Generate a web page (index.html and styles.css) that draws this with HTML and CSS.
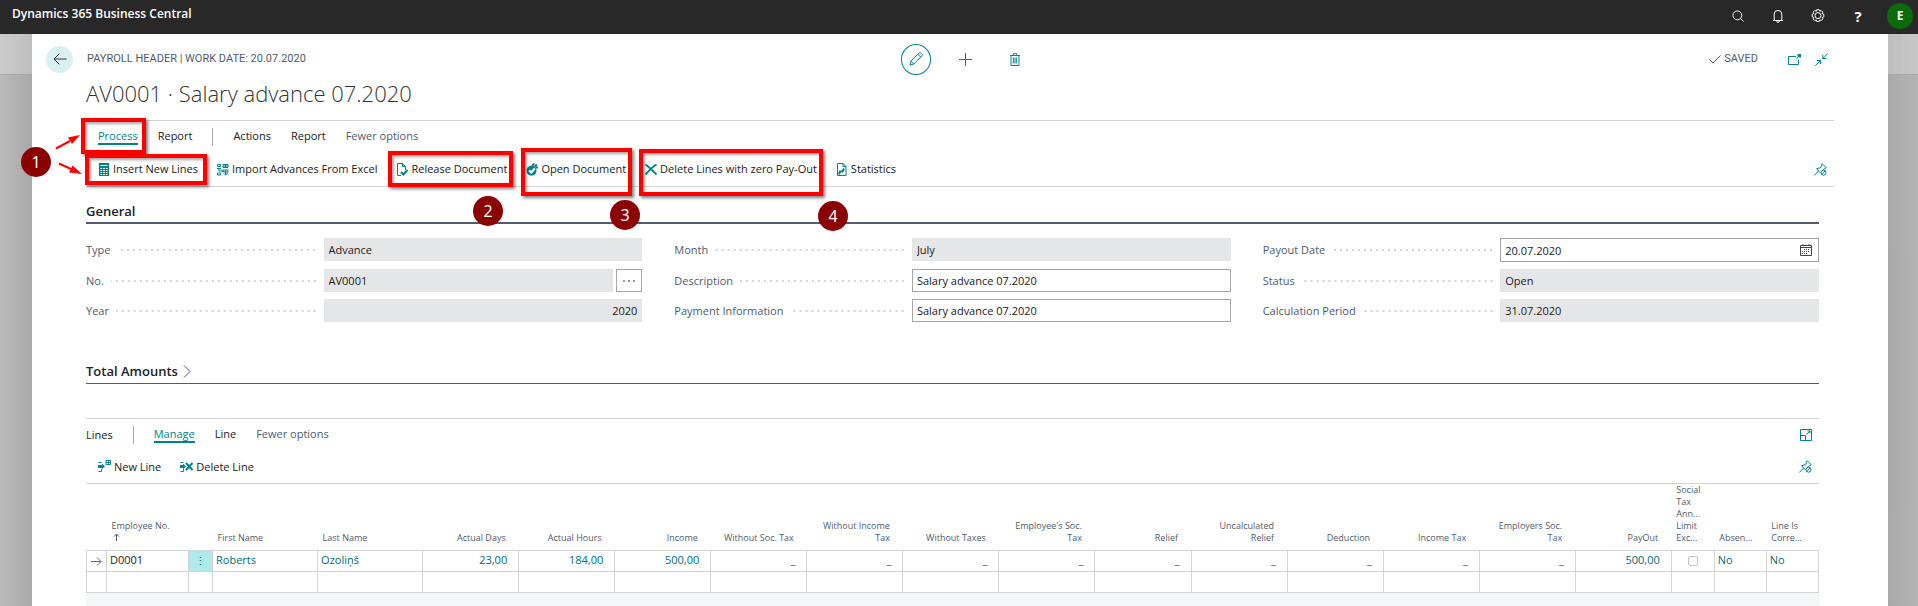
FILE: index.html
```html
<!DOCTYPE html>
<html lang="en">
<head>
<meta charset="utf-8">
<title>Dynamics 365 Business Central</title>
<link rel="stylesheet" href="styles.css">
</head>
<body>
<header class="topbar">
  <span class="brand">Dynamics 365 Business Central</span>
  <nav class="topbar-tools">
    <button class="tool" aria-label="Search"><svg width="12" height="12" viewBox="0 0 13 13"><circle cx="5.800" cy="5.800" r="4.800"/><path d="M9.200 9.200L12.500 12.500"/></svg></button>
    <button class="tool" aria-label="Notifications"><svg width="12" height="14" viewBox="0 0 12 14"><path d="M1 11.500h10M2.200 11.500V5.200a3.800 3.800 0 0 1 7.600 0V11.500M4.700 12a1.300 1.300 0 0 0 2.600 0"/></svg></button>
    <button class="tool" aria-label="Settings"><svg width="14" height="14" viewBox="0 0 14 14"><path d="M5.800.7h2.400l.5 1.500 1.500-.7 1.600 1.700-.7 1.400 1.700.6v2.600l-1.600.6.7 1.500-1.700 1.700-1.500-.7-.5 1.600H5.800l-.5-1.600-1.500.7-1.700-1.700.7-1.500-1.600-.6V5.200l1.600-.6-.7-1.400 1.700-1.700 1.500.7z"/><circle cx="7" cy="6.600" r="3"/></svg></button>
    <button class="tool tool-help" aria-label="Help">?</button>
    <button class="avatar" aria-label="Account">E</button>
  </nav>
</header>

<main class="panel">
  <div class="page-head">
    <div class="head-left">
      <button class="back" aria-label="Back"><svg width="14" height="12" viewBox="0 0 14 12"><path d="M13.500 6H1M6.300.7L1 6l5.300 5.300"/></svg></button>
      <span class="caption">PAYROLL HEADER | WORK DATE: 20.07.2020</span>
    </div>
    <div class="head-mid">
      <button class="edit" aria-label="Edit"><svg width="14" height="14" viewBox="0 0 14 14"><path d="M1 13l.9-3.800L10 1.200c1-.8 2 0 2.600.600s1 1.400.2 2.200L4.800 12z M8.900 2.300l2.800 2.800M1.900 9.200l2.900 2.800"/></svg></button>
      <button class="flat" aria-label="New"><svg width="13" height="13" viewBox="0 0 13 13"><path d="M6.500 0v13M0 6.500h13"/></svg></button>
      <button class="flat" aria-label="Delete"><svg width="10" height="13" viewBox="0 0 10 13"><path d="M0 2.500h10M3.200 2.500V.7h3.600v1.800M1 2.500v10h8v-10M3.300 4.500v6M5 4.500v6M6.700 4.500v6"/></svg></button>
    </div>
    <div class="head-right">
      <span class="saved"><svg width="12" height="9" viewBox="0 0 12 9"><path d="M.5 4.500L4 8 11.500.5"/></svg>SAVED</span>
      <button class="flat" aria-label="Open in new window"><svg width="13" height="11" viewBox="0 0 13 11"><path d="M8 2.500H.5v8h10V5.500M8.500 4.500l2.500-2.500"/><path class="solid" d="M9.500 0H13v3.500h-2V2H9.500z"/></svg></button>
      <button class="flat" aria-label="Collapse"><svg width="13" height="13" viewBox="0 0 13 13"><path d="M13 .3L7.800 5.500M7.800 2v3.500h3.700M.3 12.700l5.200-5.200M2 7.500h3.500V11"/></svg></button>
    </div>
  </div>

  <h1 class="title">AV0001 · Salary advance 07.2020</h1>

  <div class="ribbon">
    <nav class="tabs">
      <a class="tab active" href="#process">Process</a>
      <a class="tab" href="#report">Report</a>
      <span class="divider"></span>
      <a class="tab" href="#actions">Actions</a>
      <a class="tab" href="#reports">Report</a>
      <a class="tab muted" href="#fewer">Fewer options</a>
    </nav>
    <div class="actions">
      <button class="action"><svg width="12" height="13" viewBox="0 0 12 13"><path class="solid" d="M1 0h10v13H1z"/><path class="gap" d="M2.500 2.500h7M2.500 5.500h7M2.500 7.500h7M2.500 9.500h7M2.500 11.500h7"/><path d="M4.500 5v7.500M7.500 5v7.500"/></svg>Insert New Lines</button>
      <button class="action"><svg width="12" height="13" viewBox="0 0 12 13"><path d="M.5 1.500h3v2h-3zM6 1.500h5v3H6zM6 3h5M8.500 1.500v3M2 5v3h4M4.500 6.500L6 8 4.500 9.500M0 5.500h4M.5 10h3v2h-3zM6 7h5v2H6zM8.500 7v5M7 10.500l1.500 1.500L11 9.800"/></svg>Import Advances From Excel</button>
      <button class="action"><svg width="12" height="13" viewBox="0 0 12 13"><path d="M5 12.500H1.500V.5h5l3 3V7M6.500.5v3h3"/><path class="bold" d="M5 9l2.300 2.500L11.500 7"/></svg>Release Document</button>
      <button class="action"><svg width="12" height="13" viewBox="0 0 12 13"><circle class="solid" cx="5.500" cy="7.800" r="5"/><path class="knock" d="M3.200 7.300l2 2.200 3.600-4"/><path class="bold" d="M6 3.500l2-3M8.500 3.500l2.500-2M9.500 4.500H12"/></svg>Open Document</button>
      <button class="action"><svg width="12" height="13" viewBox="0 0 12 13"><path class="bold" d="M.5 1.500C4 4 8 8 11.500 11.500M11.500 1.500C7 4 3.500 8 .5 11.500"/></svg>Delete Lines with zero Pay-Out</button>
      <button class="action"><svg width="12" height="13" viewBox="0 0 12 13"><path d="M1.500.5h5.500l3 3v9H1.500zM7 .5v3h3"/><path class="bold" d="M3 11.500l1-3h2.500L8 5.500"/></svg>Statistics</button>
      <button class="flat pin" aria-label="Pin"><svg width="13" height="13" viewBox="0 0 13 13"><path d="M.3 12.500L4.500 8M2.500 5.500l4 4.500M3 5.700c1.500-.9 2.700-.5 3.700-1L8.200.7l4 4-3 2"/><circle cx="9.500" cy="9.700" r="2.500"/><path d="M7.800 11.500l3.500-3.700"/></svg></button>
    </div>
  </div>

  <div class="body">
    <h2 class="section-title">General</h2>
    <form class="fields">
      <div class="field"><label for="type">Type</label><i class="dots"></i><div class="control"><input id="type" value="Advance" readonly></div></div>
      <div class="field"><label for="month">Month</label><i class="dots"></i><div class="control"><input id="month" value="July" readonly></div></div>
      <div class="field"><label for="payout">Payout Date</label><i class="dots"></i><div class="control has-icon"><input id="payout" value="20.07.2020"><svg width="12" height="12" viewBox="0 0 12 12"><path d="M.5 1.500h11v10H.5zM.5 3.500h11M3 0v2M9 0v2"/><path class="days" d="M4 5.500h6M2 7.500h8M2 9.500h6"/></svg></div></div>
      <div class="field"><label for="no">No.</label><i class="dots"></i><div class="control"><input id="no" value="AV0001" readonly><button type="button" class="assist" aria-label="Choose number"><svg width="12" height="2" viewBox="0 0 12 2"><path d="M0 1h2M5 1h2M10 1h2"/></svg></button></div></div>
      <div class="field"><label for="desc">Description</label><i class="dots"></i><div class="control"><input id="desc" value="Salary advance 07.2020"></div></div>
      <div class="field"><label for="status">Status</label><i class="dots"></i><div class="control"><input id="status" value="Open" readonly></div></div>
      <div class="field"><label for="year">Year</label><i class="dots"></i><div class="control"><input class="num" id="year" value="2020" readonly></div></div>
      <div class="field"><label for="info">Payment Information</label><i class="dots"></i><div class="control"><input id="info" value="Salary advance 07.2020"></div></div>
      <div class="field"><label for="period">Calculation Period</label><i class="dots"></i><div class="control"><input id="period" value="31.07.2020" readonly></div></div>
    </form>

    <h2 class="section-title collapsed">Total Amounts<svg width="8" height="13" viewBox="0 0 8 13"><path d="M1 .5l6 6-6 6"/></svg></h2>

    <section class="lines">
      <nav class="tabs lines-tabs">
        <span class="lines-name">Lines</span>
        <span class="divider"></span>
        <a class="tab active" href="#manage">Manage</a>
        <a class="tab" href="#line">Line</a>
        <a class="tab muted" href="#less">Fewer options</a>
        <button class="flat pin" aria-label="Expand"><svg width="12" height="12" viewBox="0 0 12 12"><path d="M.5.5h11v11H.5zM.5 6.500h5v5M6.500 5.500L10 2M7.500 2H10v2.500"/></svg></button>
      </nav>
      <div class="actions lines-actions">
        <button class="action"><svg width="13" height="13" viewBox="0 0 13 13"><path class="solid" d="M0 5h4V3.500L7 6.500 4 9V8H0z"/><path d="M.5 2.500h3M.5 11.500h3V9M8 .5h4.500v4H8zM8 2.500h4.500M10.300.5v4"/></svg>New Line</button>
        <button class="action"><svg width="13" height="13" viewBox="0 0 13 13"><path class="solid" d="M0 5h3V3.500l3 3L3 9V8H0z"/><path d="M.5 2.500h3M.5 11.500h3V9"/><path class="bold" d="M6 3l6.500 7M12.500 3L6 10"/></svg>Delete Line</button>
        <button class="flat pin" aria-label="Pin"><svg width="13" height="13" viewBox="0 0 13 13"><path d="M.3 12.500L4.500 8M2.500 5.500l4 4.500M3 5.700c1.500-.9 2.700-.5 3.700-1L8.200.7l4 4-3 2"/><circle cx="9.500" cy="9.700" r="2.500"/><path d="M7.800 11.500l3.500-3.700"/></svg></button>
      </div>
      <table class="grid">
        <colgroup><col class="w-sel"><col class="w-emp"><col class="w-menu"><col class="w-name"><col class="w-name"><col span="13" class="w-num"><col class="w-check"><col class="w-flag"><col class="w-flag"></colgroup>
        <thead>
          <tr><th></th><th>Employee No.<br><svg class="sort" width="7" height="8" viewBox="0 0 7 8"><path d="M3.500 8V1M1 3.500L3.500 1 6 3.500"/></svg></th><th></th><th>First Name</th><th>Last Name</th><th class="r">Actual Days</th><th class="r">Actual Hours</th><th class="r">Income</th><th class="r">Without Soc. Tax</th><th class="r">Without Income<br>Tax</th><th class="r">Without Taxes</th><th class="r">Employee's Soc.<br>Tax</th><th class="r">Relief</th><th class="r">Uncalculated<br>Relief</th><th class="r">Deduction</th><th class="r">Income Tax</th><th class="r">Employers Soc.<br>Tax</th><th class="r">PayOut</th><th>Social<br>Tax<br>Ann...<br>Limit<br>Exc...</th><th>Absen...</th><th>Line Is<br>Corre...</th></tr>
        </thead>
        <tbody>
          <tr><td class="sel"><svg width="11" height="9" viewBox="0 0 11 9"><path d="M0 4.500h10M6 .5l4 4-4 4"/></svg></td><td class="plain">D0001</td><td class="menu"><button class="dots-menu" aria-label="Row menu">⋮</button></td><td>Roberts</td><td>Ozoliņš</td><td class="r">23,00</td><td class="r">184,00</td><td class="r">500,00</td><td class="r zero">_</td><td class="r zero">_</td><td class="r zero">_</td><td class="r zero">_</td><td class="r zero">_</td><td class="r zero">_</td><td class="r zero">_</td><td class="r zero">_</td><td class="r zero">_</td><td class="r">500,00</td><td class="check"><input type="checkbox" disabled aria-label="Social Tax Annual Limit Exceeded"></td><td>No</td><td>No</td></tr>
          <tr><td></td><td></td><td></td><td></td><td></td><td></td><td></td><td></td><td></td><td></td><td></td><td></td><td></td><td></td><td></td><td></td><td></td><td></td><td></td><td></td><td></td></tr>
        </tbody>
      </table>
      <div class="grid-rest"></div>
    </section>
  </div>
</main>

<div class="marks">
  <span class="box box-process"></span>
  <span class="box box-insert"></span>
  <span class="box box-release"></span>
  <span class="box box-open"></span>
  <span class="box box-delete"></span>
  <svg class="arrows" width="34" height="50" viewBox="0 0 34 50"><path d="M4 18.500L18 11M7 33.500l12 5.500"/><path class="tip" d="M28 5l-8 9-4-6.500zM30 44l-13-1.500 3.500-7z"/></svg>
  <span class="step step-1">1</span>
  <span class="step step-2">2</span>
  <span class="step step-3">3</span>
  <span class="step step-4">4</span>
</div>
</body>
</html>
```
FILE: styles.css
```css
* { box-sizing: border-box; }
html, body { height: 100%; }
body {
  margin: 0;
  display: flex;
  flex-direction: column;
  overflow: hidden;
  position: relative;
  font-family: "Open Sans", "Noto Sans", sans-serif;
  font-size: 11px;
  line-height: 16px;
  color: #212121;
  background:
    linear-gradient(180deg, rgba(255, 255, 255, .25) 74px, #a8a8a8 74px, #a8a8a8 75px, transparent 75px),
    linear-gradient(90deg, #bababa, #a9a9a9 32px, #a9a9a9 calc(100% - 30px), #b4b4b4);
}
button { font: inherit; color: inherit; background: none; border: 0; padding: 0; }
a { color: inherit; text-decoration: none; }
svg { display: block; flex: none; fill: none; stroke: #00838a; stroke-width: 1; }

.topbar {
  flex: none;
  height: 34px;
  padding: 0 5px 6px 12px;
  display: flex;
  justify-content: space-between;
  align-items: center;
  background: #282828;
  color: #fff;
}
.brand { font-size: 12px; font-weight: 600; }
.topbar-tools { display: flex; align-items: center; padding-top: 3px; }
.tool { width: 40px; height: 24px; display: grid; place-items: center; }
.tool svg { stroke: #fff; }
.tool-help { font-size: 15px; font-weight: 700; }
.avatar { width: 26px; height: 26px; margin-left: 9px; border-radius: 50%; background: #0b6a0b; font-size: 12px; font-weight: 700; }

.panel { flex: 1; margin: 0 30px 0 32px; padding: 0 54px; background: #fff; }
.page-head {
  display: grid;
  grid-template-columns: 1fr auto 1fr;
  align-items: center;
  height: 41px;
  margin-left: -40px;
  margin-right: -40px;
  padding-top: 9px;
}
.head-left { display: flex; align-items: center; gap: 14px; color: #505c6d; font-family: Roboto, sans-serif; }
.back { width: 27px; height: 27px; border-radius: 50%; background: #d9f0f2; display: grid; place-items: center; }
.back svg { stroke: #333; }
.head-mid { display: flex; align-items: center; gap: 28px; }
.edit { width: 30px; height: 31px; border: 1px solid #00838a; border-radius: 50%; display: grid; place-items: center; }
.flat { display: grid; place-items: center; }
.head-mid .flat + .flat { margin-left: 10px; }
.head-right { display: flex; align-items: center; justify-content: flex-end; gap: 14px; padding-right: 46px; color: #505c6d; font-family: Roboto, sans-serif; }
.saved { display: flex; align-items: center; gap: 3px; margin-right: 16px; }
.saved svg { stroke: #505c6d; }

.title { margin: 2px 0 11px; font-size: 22px; line-height: 32px; font-weight: 300; color: #333; }

.ribbon { border-top: 1px solid #d2d4d8; border-bottom: 1px solid #d2d4d8; }
.tabs { display: flex; align-items: center; height: 31px; padding-left: 12px; gap: 20px; }
.tab { line-height: 15px; border-bottom: 2px solid transparent; }
.tab.active { color: #00838a; border-bottom-color: #00838a; }
.muted { color: #505c6d; }
.divider { width: 1px; height: 18px; background: #a6acb5; }
.actions { display: flex; align-items: center; height: 34px; padding-left: 12px; gap: 19px; }
.action { display: flex; align-items: center; gap: 3px; white-space: nowrap; }
.bold { stroke-width: 2; }
.solid { fill: #00838a; stroke: none; }
.knock { stroke: #fff; stroke-width: 2; }
.gap { stroke: #fff; }
.pin { margin-left: auto; margin-right: 7px; }

.body { padding-right: 15px; }
.section-title { margin: 14px 0 0; padding-bottom: 1px; font-size: 13px; line-height: 20px; font-weight: 600; border-bottom: 2px solid #505c6d; }
.section-title.collapsed { display: flex; align-items: center; gap: 5px; margin-top: 39px; padding-bottom: 2px; border-bottom-width: 1px; }
.section-title svg { stroke: #505c6d; }

.fields { display: grid; grid-template-columns: repeat(3, 1fr); align-items: start; gap: 7px 32px; padding-top: 14px; }
.field { display: flex; align-items: center; color: #505c6d; }
.dots { flex: 1; height: 2px; margin: 0 6px 0 7px; background: radial-gradient(circle, #d0d3d8 1px, transparent 1px) right center / 6px 2px repeat-x; }
.control { flex: 0 0 57.3%; display: flex; gap: 3px; }
.control input { flex: 1; min-width: 0; height: 23px; padding: 0 4px; border: 1px solid #a6a6a6; border-radius: 0; background: #fff; font: inherit; color: #212121; }
.control input[readonly] { border-color: #e5e6e8; background: #e5e6e8; }
.control .num { text-align: right; }
.assist { width: 26px; border: 1px solid #a6a6a6; display: grid; place-items: center; }
.assist svg { stroke: #333; }
.has-icon { align-items: center; gap: 0; border: 1px solid #a6a6a6; padding-right: 6px; }
.has-icon input { border: 0; height: 22px; }
.has-icon svg { stroke: #444; }
.days { stroke-dasharray: 1 1; }

.lines { margin-top: 34px; border-top: 1px solid #d2d4d8; }
.lines-tabs { padding-left: 0; }
.lines-actions { border-bottom: 1px solid #d2d4d8; }
.grid { width: 100%; table-layout: fixed; border-collapse: collapse; }
.w-sel { width: 20px; }
.w-emp { width: 82px; }
.w-menu { width: 24px; }
.w-name { width: 105px; }
.w-num { width: 96px; }
.w-check { width: 43px; }
.w-flag { width: 52px; }
.grid th { height: 66px; padding: 0 0 6px 5px; vertical-align: bottom; text-align: left; font-size: 9px; line-height: 12px; font-weight: 400; color: #505c6d; white-space: nowrap; }
.sort { display: inline-block; stroke: #505c6d; margin-left: 1px; }
.grid td { height: 21px; padding: 0 0 2px 3px; border: 1px solid #d2d4d8; line-height: 16px; color: #006d73; }
.grid th.r { padding-right: 13px; text-align: right; }
.grid td.r { padding-right: 11px; text-align: right; }
.grid td.zero { font-weight: 600; }
.grid td.plain { color: #212121; }
.grid .sel { padding: 0 0 0 4px; }
.sel svg { stroke: #666; }
.grid .menu { padding: 0; background: #b0e9ec; text-align: center; }
.dots-menu { display: block; width: 100%; line-height: 16px; }
.grid .check { padding: 0; }
.check input { display: block; width: 10px; height: 10px; margin: 0 auto; appearance: none; border: 1px solid #c4c4c4; border-radius: 2px; background: #f8f8f8; }
.grid-rest { height: 20px; background: #f5f6f8; }

.marks { position: absolute; inset: 0; pointer-events: none; }
.box, .step, .arrows { position: absolute; }
.box { border: 4px solid #f00; box-shadow: 2px 2px 3px rgba(0, 0, 0, .5), inset 2px 2px 3px rgba(0, 0, 0, .35); }
.box-process { left: 81px; top: 118px; width: 65px; height: 36px; }
.box-insert { left: 85px; top: 154px; width: 122px; height: 31px; }
.box-release { left: 388px; top: 151px; width: 125px; height: 36px; }
.box-open { left: 521px; top: 148px; width: 111px; height: 48px; }
.box-delete { left: 639px; top: 149px; width: 184px; height: 47px; }
.step { width: 30px; height: 30px; border-radius: 50%; background: #8b0000; color: #fff; font: 16px/30px "Noto Sans", sans-serif; text-align: center; }
.step-1 { left: 21px; top: 147px; }
.step-2 { left: 473px; top: 196px; }
.step-3 { left: 610px; top: 200px; }
.step-4 { left: 818px; top: 201px; }
.arrows { left: 52px; top: 130px; }
.arrows path { stroke: #f00; stroke-width: 2; }
.arrows .tip { fill: #f00; stroke: none; }
```
